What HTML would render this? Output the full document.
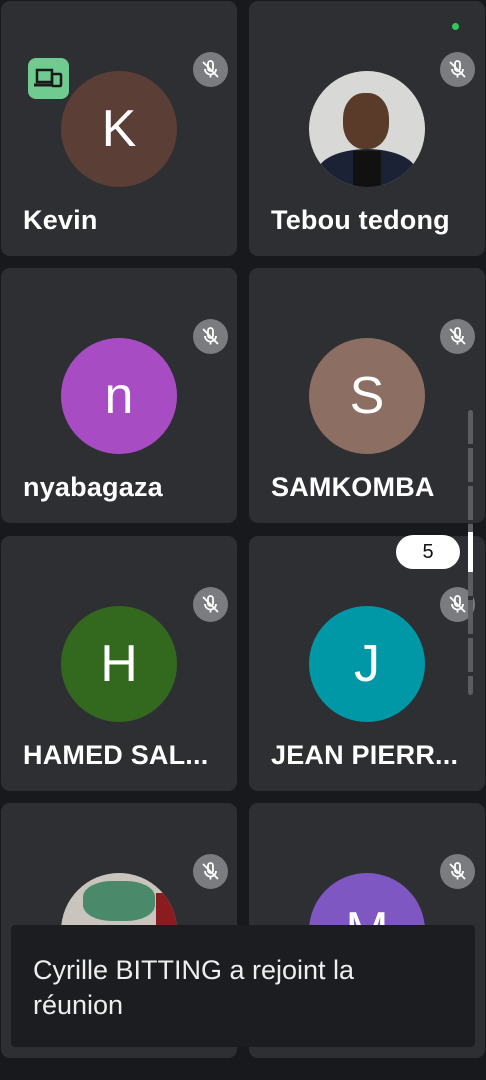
<!DOCTYPE html>
<html><head><style>
body{margin:0;width:486px;height:1080px;background:#18191d;position:relative;overflow:hidden;font-family:"Liberation Sans",sans-serif}
.t{position:absolute;width:236px;height:255px;background:#2e2f33;border-radius:9px}
.av{position:absolute;width:116px;height:116px;border-radius:50%;left:60px;top:70px;color:#fff;font-size:52px;text-align:center;line-height:116px;overflow:hidden}
.nm{position:absolute;left:22px;top:204px;color:#fff;font-size:27px;font-weight:bold;letter-spacing:0.2px}
.mu{position:absolute;left:192px;top:51px;width:35px;height:35px;border-radius:50%;background:#7b7c80}
.mu svg{position:absolute;left:7px;top:7px}
</style></head><body>
<svg width="0" height="0" style="position:absolute"><defs><g id="mic"><rect x="8" y="2" width="5" height="10" rx="2.5" fill="none" stroke="#fff" stroke-width="1.8"/><path d="M5 10a5.5 5.5 0 0 0 11 0M10.5 15.5v3" fill="none" stroke="#fff" stroke-width="1.8"/><path d="M3 3l15 15" stroke="#fff" stroke-width="1.8"/></g></defs></svg>

<div class="t" style="left:1px;top:1px"><div class="av" style="background:#5b3e35">K</div><div class="nm">Kevin</div><div class="mu"><svg width="21" height="21"><use href="#mic"/></svg></div>
<div style="position:absolute;left:27px;top:57px;width:41px;height:41px;border-radius:8px;background:#6fcb8f"><svg width="41" height="41"><rect x="9" y="12" width="15" height="12" fill="none" stroke="#1b1b1b" stroke-width="2.5"/><path d="M6 27h19" stroke="#1b1b1b" stroke-width="3"/><rect x="24" y="16" width="9" height="12" rx="1" fill="none" stroke="#1b1b1b" stroke-width="2.5"/></svg></div></div>
<div class="t" style="left:249px;top:1px"><div class="av" style="background:#d8d9d6"><div style="position:absolute;left:34px;top:22px;width:46px;height:56px;border-radius:45%;background:#5a3b2a"></div><div style="position:absolute;left:8px;right:8px;bottom:-10px;height:48px;background:#1c2235;border-radius:50% 50% 0 0"></div><div style="position:absolute;left:44px;bottom:0;width:28px;height:36px;background:#111"></div></div><div class="nm">Tebou tedong</div><div class="mu" style="left:191px"><svg width="21" height="21"><use href="#mic"/></svg></div><div style="position:absolute;left:203px;top:22px;width:7px;height:7px;border-radius:50%;background:#34c759"></div></div>

<div class="t" style="left:1px;top:268px"><div class="av" style="background:#a84cc4">n</div><div class="nm">nyabagaza</div><div class="mu"><svg width="21" height="21"><use href="#mic"/></svg></div></div>
<div class="t" style="left:249px;top:268px"><div class="av" style="background:#8d6e63">S</div><div class="nm">SAMKOMBA</div><div class="mu" style="left:191px"><svg width="21" height="21"><use href="#mic"/></svg></div></div>

<div class="t" style="left:1px;top:536px"><div class="av" style="background:#33691e">H</div><div class="nm">HAMED SAL...</div><div class="mu"><svg width="21" height="21"><use href="#mic"/></svg></div></div>
<div class="t" style="left:249px;top:536px"><div class="av" style="background:#0097a7">J</div><div class="nm">JEAN PIERR...</div><div class="mu" style="left:191px"><svg width="21" height="21"><use href="#mic"/></svg></div></div>

<div class="t" style="left:1px;top:803px"><div class="av" style="background:#c9c4bd"><div style="position:absolute;left:22px;top:8px;width:72px;height:40px;border-radius:40%;background:#4a8a6a"></div><div style="position:absolute;left:95px;top:20px;width:21px;height:60px;background:#8a1c20"></div></div><div class="mu"><svg width="21" height="21"><use href="#mic"/></svg></div></div>
<div class="t" style="left:249px;top:803px"><div class="av" style="background:#7e57c2">M</div><div class="mu" style="left:191px"><svg width="21" height="21"><use href="#mic"/></svg></div></div>

<div style="position:absolute;left:468px;top:410px;width:5px;height:285px;background:repeating-linear-gradient(#5c5d61 0 34px,#2e2f33 34px 38px);border-radius:3px"></div>
<div style="position:absolute;left:468px;top:532px;width:5px;height:40px;background:#fff"></div>
<div style="position:absolute;left:396px;top:535px;width:64px;height:34px;border-radius:17px;background:#fff;color:#111;font-size:20px;text-align:center;line-height:34px">5</div>

<div style="position:absolute;left:11px;top:925px;width:464px;height:122px;background:#1c1d21;border-radius:4px;color:#eee;font-size:27px;line-height:35px;padding:28px 70px 0 22px;box-sizing:border-box">Cyrille BITTING a rejoint la réunion</div>
</body></html>
